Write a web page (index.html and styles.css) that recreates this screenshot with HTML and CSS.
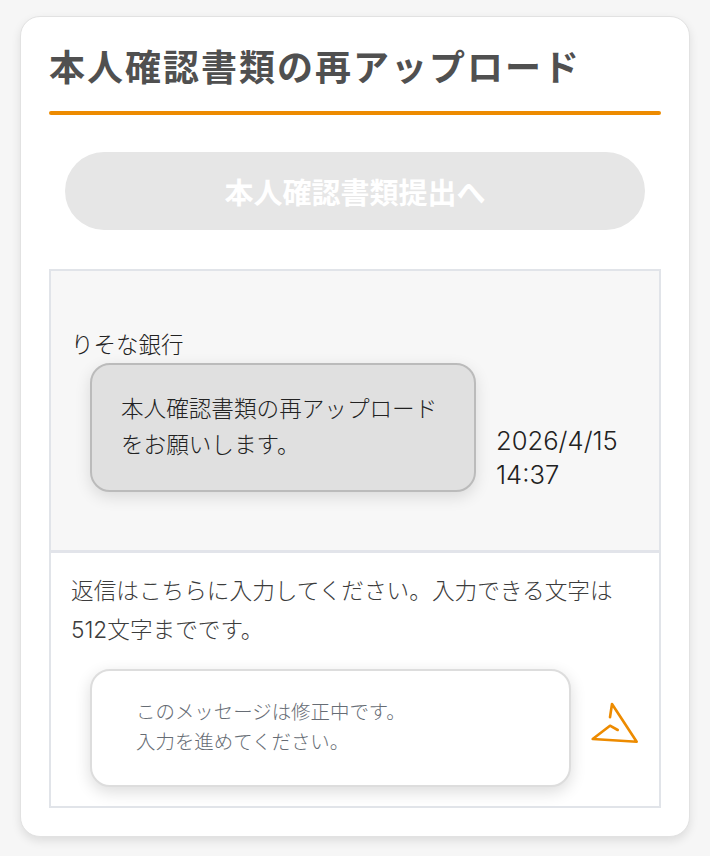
FILE: index.html
```html
<!DOCTYPE html>
<html lang="ja">
  <head>
    <meta charset="UTF-8" />
    <meta name="viewport" content="width=device-width, initial-scale=1.0" />
    <title>本人確認書類の再アップロード</title>
    <link rel="stylesheet" href="styles.css">
  </head>
  <body>
    <div class="card">
      <h1>本人確認書類の再アップロード</h1>
      <div class="rule"></div>

      <div class="action">
        <button class="submit-btn" disabled>本人確認書類提出へ</button>
      </div>

      <section class="panel">
        <div class="history">
          <div class="sender">りそな銀行</div>
          <div class="message-row">
            <div class="bubble">本人確認書類の再アップロードをお願いします。</div>
            <div class="time">2026/4/15<br />14:37</div>
          </div>
        </div>

        <div class="reply">
          <p class="note">返信はこちらに入力してください。入力できる文字は512文字までです。</p>
          <div class="reply-row">
            <div class="reply-box">このメッセージは修正中です。<br />入力を進めてください。</div>
            <button class="send-btn" aria-label="送信">
              <svg width="50" height="44" viewBox="0 0 50 44" fill="none">
                <path d="M20 16.3L22 3L46.7 40.7L2.7 38L20 24.7L27.7 29" stroke="#ed8b00" stroke-width="2.6" stroke-linecap="round" stroke-linejoin="round" />
              </svg>
            </button>
          </div>
        </div>
      </section>
    </div>
  </body>
</html>
```

FILE: styles.css
```css
* {
  margin: 0;
  padding: 0;
  box-sizing: border-box;
  font-family: "Inter", "Noto Sans CJK JP", sans-serif;
}

html,
body {
  height: 856px;
  overflow: hidden;
}

body {
  background-color: #f6f6f6;
  color: #333;
  padding: 16px 20px 0;
}

.card {
  height: 821px;
  background: #fff;
  border: 1px solid #e2e2e2;
  border-radius: 20px;
  box-shadow: 0 4px 10px rgba(0, 0, 0, 0.1);
  padding: 0 28px;
}

h1 {
  color: #505050;
  font-size: 36px;
  font-weight: 700;
  letter-spacing: 2px;
  line-height: 50px;
  padding-top: 26px;
  height: 94px;
  white-space: nowrap;
}

.rule {
  height: 4px;
  background: #ed8b00;
  border-radius: 2px;
}

.action {
  padding: 37px 16px 39px;
}

.submit-btn {
  display: block;
  width: 100%;
  height: 78px;
  background-color: #e6e6e6;
  color: #fff;
  border: none;
  border-radius: 39px;
  font-size: 29px;
  font-weight: 700;
}

.panel {
  height: 539px;
  border: 2px solid #e1e4e9;
}

.history {
  height: 282px;
  background: #f7f7f7;
  border-bottom: 3px solid #e2e4ea;
  padding: 58px 0 0 20px;
}

.sender {
  font-size: 22.5px;
  font-weight: 300;
  line-height: 32px;
  color: #222;
}

.message-row {
  display: flex;
  align-items: flex-end;
  padding-left: 19px;
  margin-top: 2px;
}

.bubble {
  width: 386px;
  height: 129px;
  background: #e0e0e0;
  border: 2px solid #bbb;
  border-radius: 20px;
  box-shadow: 0 5px 16px rgba(0, 0, 0, 0.12);
  padding: 26px 26px 0 29px;
  font-size: 22.6px;
  font-weight: 300;
  line-height: 36px;
  color: #222;
}

.time {
  margin-left: 20px;
  font-size: 25.6px;
  font-weight: 300;
  line-height: 34px;
  color: #222;
}

.reply {
  padding: 18px 20px 0;
}

.note {
  font-size: 22.65px;
  font-weight: 300;
  line-height: 39px;
  color: #3c3c3c;
}

.reply-row {
  display: flex;
  align-items: center;
  margin-top: 20px;
  padding-left: 19px;
}

.reply-box {
  flex: none;
  width: 481px;
  height: 118px;
  background: #fff;
  border: 2px solid #ddd;
  border-radius: 20px;
  box-shadow: 0 5px 16px rgba(0, 0, 0, 0.14);
  padding: 26px 0 0 44px;
  font-size: 19.45px;
  font-weight: 300;
  line-height: 30px;
  color: #666c74;
}

.send-btn {
  flex: none;
  display: flex;
  margin: 0 0 10px 19px;
  background: none;
  border: none;
}
```
